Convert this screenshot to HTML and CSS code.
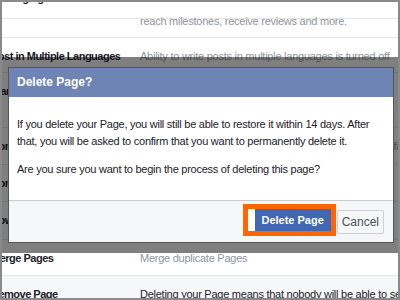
FILE: index.html
```html
<html>
<head>
    <title>Delete Page?</title>
    <meta name="viewport" content="width=device-width, initial-scale=1.0">
    <link rel="stylesheet" href="styles.css">
</head>
<body>
    <div class="frame">
        <div class="settings">
            <div class="row row-first">
                <div class="label">Messaging</div>
                <div class="desc"></div>
            </div>
            <div class="row row-cont">
                <div class="label"></div>
                <div class="desc">reach milestones, receive reviews and more.</div>
            </div>
            <div class="row row-short">
                <div class="label">Post in Multiple Languages</div>
                <div class="desc">Ability to write posts in multiple languages is turned off</div>
            </div>
            <div class="row row-tall">
                <div class="label">Translate Automatically</div>
                <div class="desc">Your posts may show translations automatically for<br>people who read other languages</div>
            </div>
            <div class="row">
                <div class="label">Comment Ranking</div>
                <div class="desc">Most relevant comments are shown for my Page by default</div>
            </div>
            <div class="row">
                <div class="label">Content Distribution</div>
                <div class="desc">Downloading to Facebook is allowed</div>
            </div>
            <div class="row row-wide">
                <div class="label">Download Page</div>
                <div class="desc">Download Page</div>
            </div>
            <div class="row row-merge">
                <div class="label">Merge Pages</div>
                <div class="desc">Merge duplicate Pages</div>
            </div>
            <div class="row row-hover">
                <div class="label">Remove Page</div>
                <div class="desc dark">Deleting your Page means that nobody will be able to see or find it.</div>
            </div>
        </div>

        <div class="overlay">
            <div class="dialog">
                <div class="dialog-header">Delete Page?</div>
                <div class="dialog-body">
                    <p>If you delete your Page, you will still be able to restore it within 14 days. After that, you will be asked to confirm that you want to permanently delete it.</p>
                    <p>Are you sure you want to begin the process of deleting this page?</p>
                </div>
                <div class="dialog-footer">
                    <span class="highlight">
                        <button class="btn btn-primary">Delete Page</button>
                    </span>
                    <button class="btn btn-cancel">Cancel</button>
                </div>
            </div>
        </div>
    </div>
</body>
</html>
```

FILE: styles.css
```css
html, body {
    margin: 0;
    padding: 0;
    background: #fff;
}
body {
    font-family: "Liberation Sans", Arial, sans-serif;
    color: #1d2129;
    letter-spacing: -0.25px;
}
.frame {
    position: relative;
    width: 400px;
    height: 300px;
    box-sizing: border-box;
    border: 2px solid #8a8a8a;
    overflow: hidden;
    background: #fff;
}
.settings {
    margin-left: -11px;
    font-size: 11px;
}
.row {
    display: flex;
    height: 37px;
    box-sizing: border-box;
    padding-top: 11px;
    border-bottom: 1px solid #e5e5e5;
    line-height: 14px;
}
.row-first {
    height: 17px;
    padding-top: 0;
}
.row-first .label {
    margin-top: -11px;
}
.row-cont {
    height: 19px;
    padding-top: 0;
}
.row-cont .desc {
    margin-top: -5px;
}
.row-short {
    height: 35px;
}
.row-tall {
    height: 55px;
}
.row-wide {
    height: 38px;
}
.row-merge {
    height: 36px;
}
.row-hover {
    background: #f6f7f9;
}
.label {
    width: 149px;
    flex-shrink: 0;
    font-weight: bold;
    letter-spacing: -0.5px;
    color: #1d2129;
    white-space: nowrap;
}
.desc {
    color: #90949c;
    white-space: nowrap;
}
.desc.dark {
    color: #1d2129;
}
.overlay {
    position: absolute;
    left: 0;
    right: 0;
    top: 55px;
    height: 196px;
    box-sizing: border-box;
    padding: 10px 4px 0 6px;
    background: rgba(0, 0, 0, 0.5);
}
.dialog {
    border: 1px solid #555;
    background: #fff;
}
.dialog-header {
    height: 29px;
    box-sizing: border-box;
    padding: 0 8px;
    line-height: 29px;
    background: #6d84b4;
    color: #fff;
    font-size: 12px;
    font-weight: bold;
    letter-spacing: 0;
}
.dialog-body {
    padding: 19px 8px 22px;
    font-size: 11px;
    line-height: 17px;
    color: #1d2129;
}
.dialog-body p {
    margin: 0 0 11px;
}
.dialog-body p:last-child {
    margin-bottom: 0;
}
.dialog-footer {
    display: flex;
    justify-content: flex-end;
    align-items: center;
    height: 42px;
    box-sizing: border-box;
    padding: 0 9px 0 0;
    border-top: 1px solid #ccc;
    background: #f5f6f7;
}
.highlight {
    display: flex;
    margin-bottom: 4px;
    padding-left: 7px;
    border: 5px solid #ff6600;
    background: #fff;
}
.btn {
    font-family: inherit;
    letter-spacing: 0;
    border-radius: 2px;
    cursor: pointer;
}
.btn-primary {
    height: 22px;
    width: 76px;
    padding: 0;
    border: 1px solid #4267b2;
    border-radius: 0;
    background: #4267b2;
    color: #fff;
    font-size: 11px;
    font-weight: bold;
}
.btn-cancel {
    height: 24px;
    padding: 0 4px;
    margin-left: 1px;
    border: 1px solid #ced0d4;
    background: #f6f7f9;
    color: #4b4f56;
    font-size: 12px;
}
```
